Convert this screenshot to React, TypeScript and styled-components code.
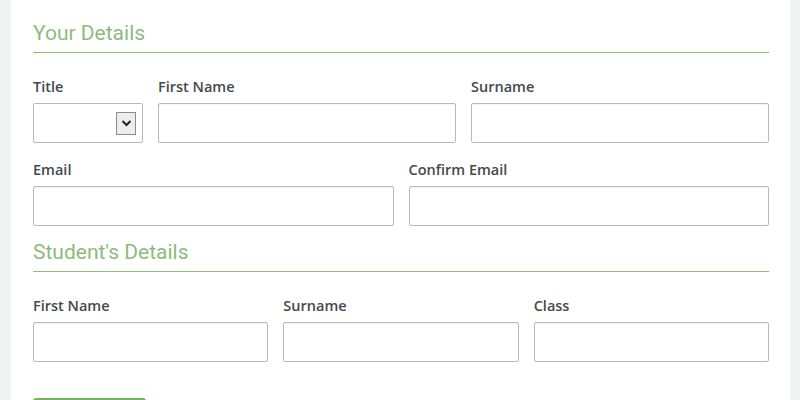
import React from 'react';
import styled, { createGlobalStyle } from 'styled-components';

const GlobalStyle = createGlobalStyle`
  html, body {
    margin: 0;
    padding: 0;
    background: #f1f3f4;
    font-family: Roboto, "Liberation Sans", Arial, sans-serif;
  }
  * { box-sizing: border-box; }
`;

const StyledPage = styled.div`
  width: 800px;
  height: 400px;
  overflow: hidden;
  padding: 0 10px 0 11px;
  background: #f1f3f4;
`;

const StyledPanel = styled.form`
  height: 100%;
  background: #ffffff;
  padding: 20px 21px 0 22px;
`;

const StyledHeading = styled.h2<{ $first?: boolean }>`
  margin: ${({ $first }) => ($first ? '0' : '13px')} 0 0;
  padding-bottom: 6px;
  border-bottom: 1px solid #8cc46d;
  font-size: 21px;
  line-height: 26px;
  font-weight: 400;
  color: #8dbb7d;
`;

const StyledRow = styled.div<{ $cols: string; $top: number }>`
  display: grid;
  grid-template-columns: ${({ $cols }) => $cols};
  column-gap: 15px;
  margin-top: ${({ $top }) => $top}px;
`;

const StyledField = styled.label`
  display: flex;
  flex-direction: column;
  min-width: 0;
`;

const StyledLabel = styled.span`
  font-family: "Open Sans", Roboto, sans-serif;
  font-size: 14.5px;
  line-height: 18px;
  font-weight: 600;
  color: #45494b;
  margin-bottom: 7px;
`;

const StyledInput = styled.input`
  height: 40px;
  width: 100%;
  border: 1px solid #b8b8b8;
  border-radius: 2px;
  box-shadow: inset 0 1px 1px rgba(0, 0, 0, 0.05);
  background: #fff;
  outline: none;
  padding: 0 10px;
  font: inherit;
`;

const StyledSelect = styled.div`
  height: 40px;
  border: 1px solid #b8b8b8;
  border-radius: 2px;
  background: #fff;
  display: flex;
  align-items: center;
  justify-content: flex-end;
  padding-right: 6px;
`;

const StyledArrowBox = styled.span`
  width: 20px;
  height: 23px;
  border: 1px solid #8c8c8c;
  background: #ededed;
  display: flex;
  align-items: center;
  justify-content: center;
`;

const StyledButton = styled.button`
  margin-top: 36px;
  width: 113px;
  height: 38px;
  border: none;
  border-radius: 3px;
  background: #6dba4f;
`;

const Chevron = () => (
  <svg width="11" height="8" viewBox="0 0 11 8">
    <path d="M1.5 2 L5.5 6 L9.5 2" fill="none" stroke="#222" strokeWidth="2" />
  </svg>
);

const Field = ({ label }: { label: string }) => (
  <StyledField>
    <StyledLabel>{label}</StyledLabel>
    <StyledInput type="text" />
  </StyledField>
);

export default function App() {
  return (
    <>
      <GlobalStyle />
      <StyledPage>
        <StyledPanel>
          <StyledHeading $first>Your Details</StyledHeading>
          <StyledRow $cols="110px 1fr 1fr" $top={25}>
            <StyledField>
              <StyledLabel>Title</StyledLabel>
              <StyledSelect>
                <StyledArrowBox>
                  <Chevron />
                </StyledArrowBox>
              </StyledSelect>
            </StyledField>
            <Field label="First Name" />
            <Field label="Surname" />
          </StyledRow>
          <StyledRow $cols="1fr 1fr" $top={18}>
            <Field label="Email" />
            <Field label="Confirm Email" />
          </StyledRow>
          <StyledHeading>Student's Details</StyledHeading>
          <StyledRow $cols="1fr 1fr 1fr" $top={25}>
            <Field label="First Name" />
            <Field label="Surname" />
            <Field label="Class" />
          </StyledRow>
          <StyledButton type="button" aria-label="Submit" />
        </StyledPanel>
      </StyledPage>
    </>
  );
}
